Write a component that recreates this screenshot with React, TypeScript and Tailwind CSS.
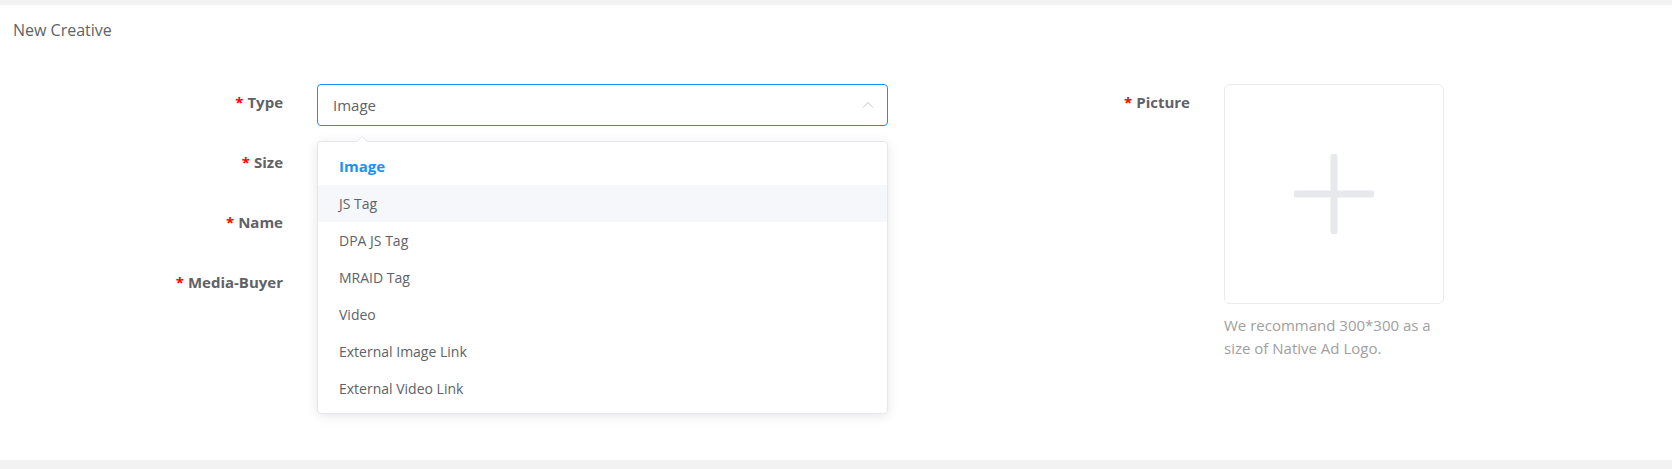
import React from 'react';

const options = [
  'Image',
  'JS Tag',
  'DPA JS Tag',
  'MRAID Tag',
  'Video',
  'External Image Link',
  'External Video Link',
];

const Label: React.FC<{ text: string; width: string }> = ({ text, width }) => (
  <div className={`${width} shrink-0 text-right text-[15px] font-bold leading-9 text-[#606266]`}>
    <span className="mr-1 text-[#ff0000]">*</span>
    {text}
  </div>
);

export default function App() {
  const active = 'Image';
  const hovered = 'JS Tag';

  return (
    <div
      className="h-[469px] w-full bg-[#f2f2f2] pt-[5px] pb-[9px]"
      style={{ fontFamily: '"Open Sans", "Noto Sans", sans-serif' }}
    >
      <div className="h-full bg-white">
        <div className="px-[13px] pt-[14px] text-[16px] leading-[22px] text-[#606266]">New Creative</div>

        <div className="mt-[43px] flex">
          {/* left column */}
          <div className="flex flex-col gap-[18px]">
            <div className="flex">
              <Label text="Type" width="w-[283px]" />
              <div className="relative ml-[34px] w-[571px]">
                <div className="flex h-[42px] items-center justify-between rounded-[4px] border border-[#1890ff] px-[15px] text-[15px] text-[#606266]">
                  <span>Image</span>
                  <svg width="14" height="14" viewBox="0 0 14 14" className="mr-[-3px]">
                    <path d="M2 9.5 L7 4.5 L12 9.5" fill="none" stroke="#c0c4cc" strokeWidth="1" />
                  </svg>
                </div>

                {/* dropdown */}
                <div className="absolute left-0 top-[57px] z-10 w-[571px] rounded-[4px] border border-[#e4e7ed] bg-white py-[6px] shadow-[0_2px_12px_0_rgba(0,0,0,0.1)]">
                  <div className="absolute left-[38px] top-[-6px] h-0 w-0 border-x-[6px] border-b-[6px] border-x-transparent border-b-[#e4e7ed]" />
                  <div className="absolute left-[39px] top-[-5px] h-0 w-0 border-x-[5px] border-b-[5px] border-x-transparent border-b-white" />
                  {options.map((o) => (
                    <div
                      key={o}
                      className={`flex h-[37px] items-center px-[21px] ${
                        o === active
                          ? 'text-[15px] font-bold text-[#1890ff]'
                          : 'text-[14px] text-[#606266]'
                      } ${o === hovered ? 'bg-[#f5f7fa]' : ''}`}
                    >
                      {o}
                    </div>
                  ))}
                </div>
              </div>
            </div>

            {['Size', 'Name', 'Media-Buyer'].map((l) => (
              <div key={l} className="flex">
                <Label text={l} width="w-[283px]" />
                <div className="ml-[34px] h-[42px] w-[571px] rounded-[4px] border border-[#dcdfe6]" />
              </div>
            ))}
          </div>

          {/* right column */}
          <div className="flex">
            <Label text="Picture" width="w-[302px]" />
            <div className="ml-[34px] w-[220px]">
              <div className="flex h-[220px] w-[220px] items-center justify-center rounded-[6px] border border-[#ebebeb]">
                <svg width="80" height="80" viewBox="0 0 80 80">
                  <path d="M40 3 V77 M3 40 H77" stroke="#e6e8eb" strokeWidth="7" strokeLinecap="round" />
                </svg>
              </div>
              <div className="mt-[10px] text-[15px] leading-[23px] text-[#a0a0a0]">
                We recommand 300*300 as a size of Native Ad Logo.
              </div>
            </div>
          </div>
        </div>
      </div>
    </div>
  );
}
